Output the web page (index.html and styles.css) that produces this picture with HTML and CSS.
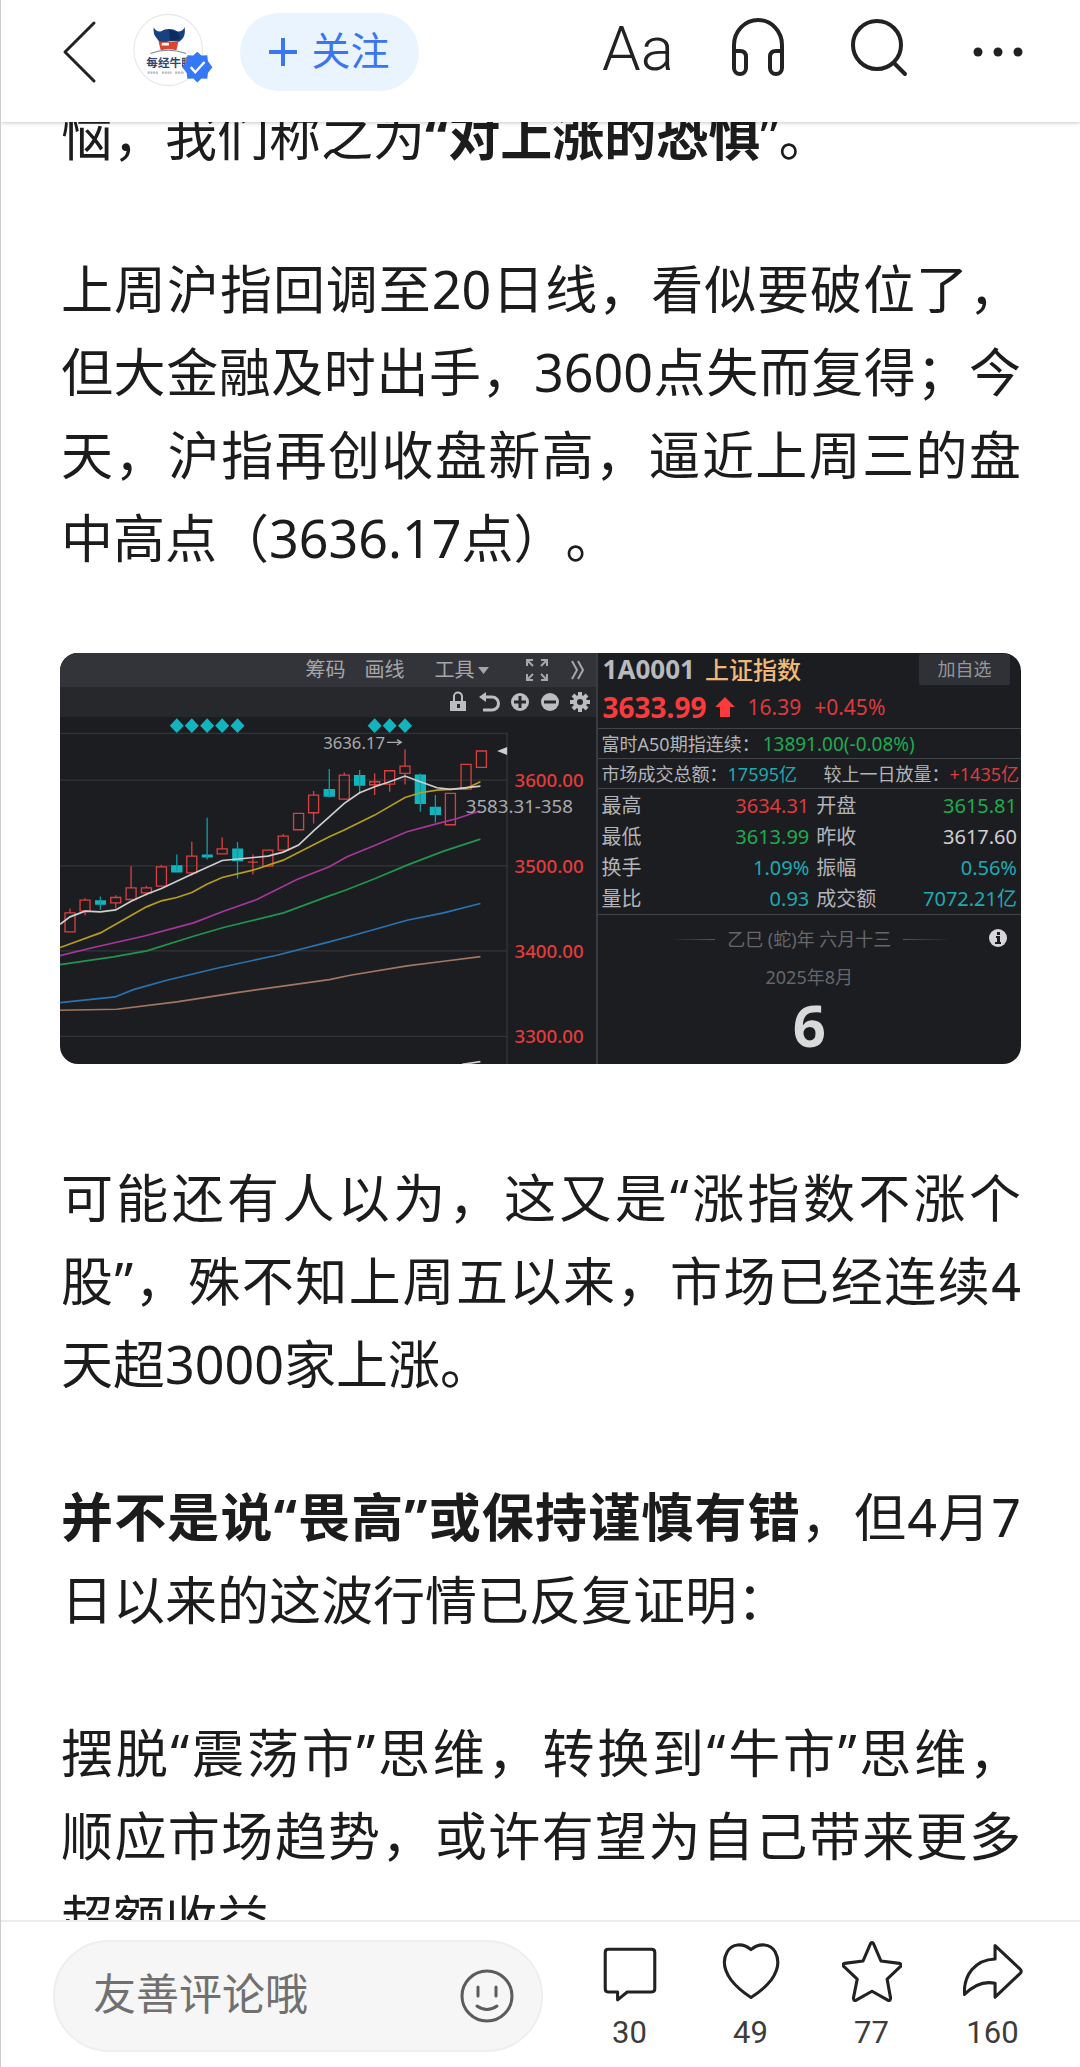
FILE: index.html
```html
<!DOCTYPE html>
<html lang="zh-CN">
<head>
<meta charset="utf-8">
<meta name="viewport" content="width=device-width, initial-scale=1">
<title>对上涨的恐惧</title>
<link rel="stylesheet" href="styles.css">
</head>
<body>
<header class="topbar">
  <button class="icon-btn back" aria-label="返回">
    <svg width="36" height="64" viewBox="0 0 36 64"><path d="M32 3 3 32 32 61"/></svg>
  </button>
  <a class="author" href="#" aria-label="作者主页">
    <svg width="80" height="74" viewBox="386 42 232 216">
      <ellipse cx="488" cy="150" rx="100" ry="104" fill="#fff" stroke="#e6e6e6" stroke-width="3"/>
      <path d="M460 125h58l-6 26q-22-6-46 0z" fill="#d9452f"/>
      <path d="M470 129h20v8h-22z" fill="#fff"/>
      <path d="M446 83q4 14 20 13 24-14 50 0 16 0 20-13 4 26-10 38l-6 5-24-3-14 4-20-1-6-8q-14-14-10-35z" fill="#17427f"/>
      <path d="M490 90l26 8 8 20-30 6z" fill="#0d2c5e"/>
      <path d="M436 160q50-18 104 0" fill="none" stroke="#7b8594" stroke-width="3"/>
      <text x="424" y="200" class="logo-name">每经牛眼</text>
      <path d="M428 216h30m12 0h28m10 0h26" stroke="#b5bac4" stroke-width="6" stroke-dasharray="6 2"/>
      <path d="M573 155l12 11 17-1 2 17 13 18-13 17-2 17-17-1-12 12-12-12-17 1-2-17-13-17 13-18 2-17 17 1z" fill="#3478f6"/>
      <path d="M554 200l13 15 27-30" fill="none" stroke="#fff" stroke-width="7"/>
    </svg>
  </a>
  <button class="follow">
    <svg width="28" height="28" viewBox="0 0 28 28"><path d="M14 1v26M1 14h26"/></svg>
    <span>关注</span>
  </button>
  <nav class="tools" aria-label="阅读工具">
    <button class="icon-btn type" aria-label="字号">Aa</button>
    <button class="icon-btn" aria-label="收听">
      <svg width="56" height="60" viewBox="0 0 56 60"><path d="M4 34V28a24 25 0 0 1 48 0v6M4 34h6q6 0 6 6v11a6 6 0 0 1-12 0zM52 34h-6q-6 0-6 6v11a6 6 0 0 0 12 0z"/></svg>
    </button>
    <button class="icon-btn" aria-label="搜索">
      <svg width="58" height="60" viewBox="0 0 58 60"><circle cx="27" cy="28" r="24"/><path d="M44 46 55 57"/></svg>
    </button>
    <button class="icon-btn" aria-label="更多">
      <svg width="52" height="60" viewBox="0 0 52 60"><g class="solid"><circle cx="6" cy="35" r="4.5"/><circle cx="26" cy="35" r="4.5"/><circle cx="46" cy="35" r="4.5"/></g></svg>
    </button>
  </nav>
</header>

<main class="reader">
  <article class="article">
    <p>恼，我们称之为<b>“对上涨的恐惧</b>”。</p>
    <p>上周沪指回调至20日线，看似要破位了，但大金融及时出手，3600点失而复得；今天，沪指再创收盘新高，逼近上周三的盘中高点（3636.17点）。</p>

    <figure class="quote-card">
      <section class="chart" aria-label="上证指数日K线">
        <div class="menu">
          <span>筹码</span>
          <span>画线</span>
          <span class="drop">工具<svg width="11" height="7" viewBox="0 0 11 7"><path d="M0 0h11L5.5 7z"/></svg></span>
          <svg class="expand" width="24" height="24" viewBox="0 0 24 24"><path d="M2 8V2h6M2 2l6 6M16 2h6v6M22 2l-6 6M2 16v6h6M2 22l6-6M22 16v6h-6M22 22l-6-6"/></svg>
          <svg class="more" width="13" height="20" viewBox="0 0 13 20"><path d="M1 1l5 9-5 9M7 1l5 9-5 9"/></svg>
        </div>
        <div class="icons">
          <svg width="30" height="22" viewBox="0 0 30 22"><path d="M5 10h16v10H5z"/><path d="M9 10V6a4 4 0 0 1 8-1v5" fill="none" stroke="#bcbdc0" stroke-width="2"/><path d="M12 13h3v4h-3z" fill="#27282c"/></svg>
          <svg width="30" height="22" viewBox="0 0 30 22"><path d="M8 6h9a6 6 0 0 1 0 13h-9" fill="none" stroke="#bcbdc0" stroke-width="3"/><path d="M4 6l7-5v10z"/></svg>
          <svg width="30" height="22" viewBox="0 0 30 22"><circle cx="15" cy="11" r="9"/><path d="M15 5v12M9 11h12" stroke="#27282c" stroke-width="3"/></svg>
          <svg width="30" height="22" viewBox="0 0 30 22"><circle cx="15" cy="11" r="9"/><path d="M9 11h12" stroke="#27282c" stroke-width="3"/></svg>
          <svg width="30" height="22" viewBox="0 0 30 22"><circle cx="15" cy="11" r="5" fill="none" stroke="#bcbdc0" stroke-width="4"/><path d="M15 1v4M15 17v4M5 11h4M21 11h4M8 4l3 3M19 15l3 3M22 4l-3 3M11 15l-3 3" stroke="#bcbdc0" stroke-width="4"/></svg>
        </div>
        <svg class="plot" viewBox="30 231 1605 1041">
          <path class="grid" d="M30 280H1370V1272M30 420H1370M30 677H1370M30 932H1370M30 1188H1370"/>
          <path class="teal" d="M359 257l21-22 21 22-21 22zM404 257l21-22 21 22-21 22zM450 257l21-22 21 22-21 22zM495 257l21-22 21 22-21 22zM541 257l21-22 21 22-21 22zM952 257l21-22 21 22-21 22zM997 257l21-22 21 22-21 22zM1043 257l21-22 21 22-21 22z"/>
          <g class="up">
            <path d="M45 818h30v57H45zM60 805v13M90 780h30v32H90zM105 774v6M105 812v13M182 772h30v16h-30zM197 765v7M197 788v17M228 743h30v35h-30zM243 678v65M274 743h30v15h-30zM289 737v6M289 758v8M319 680h30v58h-30zM334 674v6M410 648h30v50h-30zM425 605v43M425 698v8M501 626h30v15h-30zM516 592v34M593 666h30M608 643v60M638 630h30v48h-30zM684 588h30v42h-30zM699 582v6M730 520h30v49h-30zM775 465h30v53h-30zM790 453v12M790 518v32"/>
            <path d="M867 405h30v72h-30zM882 397v8M958 425h30v9h-30zM973 400v65M1003 392h30v40h-30zM1018 432v23M1049 378h30v22h-30zM1064 328v50M1064 400v33M1185 460h30v94h-30zM1232 373h30v74h-30zM1278 333h30v49h-30z"/>
          </g>
          <g class="teal">
            <path d="M135 780h33v14h-33zM363 675h34v22h-34zM455 643h33v9h-33zM546 625h33v38h-33zM820 447h34v23h-34zM911 405h34v32h-34zM1093 403h34v89h-34zM1138 500h34v25h-34z"/>
            <path class="wick" d="M151 769v40M380 643v50M471 533v125M562 606v109M837 387v85M928 390v70M1110 400v115M1155 465v82"/>
          </g>
          <polyline class="ma" stroke="#a5765f" points="30,1110 200,1107 380,1085 560,1057 837,1018 900,1005 1070,977 1180,963 1290,949"/>
          <polyline class="ma" stroke="#2874b2" points="30,1087 195,1070 250,1048 350,1020 500,984 680,945 837,905 900,888 1070,840 1180,818 1290,790"/>
          <polyline class="ma" stroke="#1f9650" points="30,973 190,950 290,932 430,888 520,862 700,818 837,767 885,750 973,716 1070,675 1180,633 1290,597"/>
          <polyline class="ma" stroke="#a8369c" points="30,946 130,922 280,888 430,848 520,813 620,778 740,718 837,680 890,650 973,616 1070,575 1155,552 1220,535 1290,512"/>
          <polyline class="ma" stroke="#b79e1c" points="30,922 151,878 243,826 289,800 334,782 380,772 425,757 470,732 516,712 608,690 699,660 837,590 882,570 973,525 1064,472 1110,458 1160,450 1247,445 1290,425"/>
          <polyline class="ma" stroke="#cfcfcf" points="30,852 60,830 105,813 151,815 197,809 243,783 289,762 334,745 425,702 516,661 580,655 653,648 699,636 745,615 790,572 837,530 882,490 928,458 973,440 1018,425 1064,408 1110,425 1160,443 1200,448 1290,438"/>
          <path class="ma" stroke="#cfcfcf" d="M1235 1272 1290 1264"/>
          <path d="M1340 333l30-12v24z" fill="#cfcfcf"/>
          <path d="M1010 307h42M1040 299l13 8-13 8" fill="none" stroke="#a9aaad" stroke-width="4"/>
          <text class="note" x="819" y="327">3636.17</text>
          <text class="note big" x="1246" y="519">3583.31-358</text>
          <text class="tick" x="1392" y="442">3600.00</text>
          <text class="tick" x="1392" y="698">3500.00</text>
          <text class="tick" x="1392" y="953">3400.00</text>
          <text class="tick" x="1392" y="1209">3300.00</text>
        </svg>
      </section>

      <section class="quote">
        <div class="name">
          <b>1A0001</b><strong>上证指数</strong>
          <button class="add">加自选</button>
        </div>
        <div class="price">
          <b>3633.99</b>
          <svg width="20" height="20" viewBox="0 0 20 20"><path d="M10 0 20 10H15V20H5V10H0z"/></svg>
          <span>16.39</span><span>+0.45%</span>
        </div>
        <div class="line"><span>富时A50期指连续：</span><span class="green future">13891.00(-0.08%)</span></div>
        <div class="line split"><span>市场成交总额：</span><span class="cyan">17595亿</span><span class="next">较上一日放量：</span><span class="red">+1435亿</span></div>
        <table class="stats">
          <tr><th scope="row">最高</th><td class="red">3634.31</td><th scope="row">开盘</th><td class="green">3615.81</td></tr>
          <tr><th scope="row">最低</th><td class="green">3613.99</td><th scope="row">昨收</th><td>3617.60</td></tr>
          <tr><th scope="row">换手</th><td class="cyan">1.09%</td><th scope="row">振幅</th><td class="cyan">0.56%</td></tr>
          <tr><th scope="row">量比</th><td class="cyan">0.93</td><th scope="row">成交额</th><td class="cyan">7072.21亿</td></tr>
        </table>
        <div class="calendar">
          <div class="lunar">
            <i class="rule"></i><span>乙巳 (蛇)年 六月十三</span><i class="rule flip"></i>
            <svg class="info" width="18" height="18" viewBox="0 0 18 18"><circle cx="9" cy="9" r="9" fill="#d6d6d8"/><path d="M8 3h3v3H8zM7 7h4v6h1v2H6v-2h2V9H7z" fill="#1c1d21"/></svg>
          </div>
          <div class="month">2025年8月</div>
          <div class="day">6</div>
        </div>
      </section>
    </figure>

    <p>可能还有人以为，这又是“涨指数不涨个股”，殊不知上周五以来，市场已经连续4天超3000家上涨。</p>
    <p><b>并不是说“畏高”或保持谨慎有错</b>，但4月7日以来的这波行情已反复证明：</p>
    <p>摆脱“震荡市”思维，转换到“牛市”思维，<span class="keep">顺应</span>市场趋势，或许有望为自己带来更多超额收益</p>
  </article>
</main>

<footer class="bottombar">
  <div class="comment-box">
    <input type="text" placeholder="友善评论哦" aria-label="评论">
    <button class="icon-btn smile" aria-label="表情">
      <svg width="54" height="54" viewBox="0 0 54 54"><circle cx="27" cy="27" r="25"/><path d="M18 18v9M36 18v9M17 37q10 7 20 0"/></svg>
    </button>
  </div>
  <button class="action" aria-label="评论 30">
    <svg width="60" height="64" viewBox="171 185 174 186"><path d="M194 212H321Q330 212 330 221V327Q330 336 321 336H250L222 359V336H194Q186 336 186 327V221Q186 212 194 212z"/></svg>
    <span>30</span>
  </button>
  <button class="action" aria-label="点赞 49">
    <svg width="60" height="64" viewBox="523 185 174 186"><path d="M610 213C585 192 555 196 541 219 526 245 532 273 552 301 568 322 588 338 610 352 632 338 653 322 669 301 689 273 694 245 680 219 666 196 635 192 610 213z"/></svg>
    <span>49</span>
  </button>
  <button class="action" aria-label="收藏 77">
    <svg width="60" height="64" viewBox="876 185 174 186"><path d="M959 195Q963 190 967 195L989 246 1043 253Q1051 256 1046 262L1007 299 1017 354Q1016 363 1009 360L963 334 917 360Q910 363 909 354L920 299 881 262Q875 256 883 253L937 246z"/></svg>
    <span>77</span>
  </button>
  <button class="action" aria-label="分享 160">
    <svg width="60" height="64" viewBox="1228 185 174 186"><path d="M1321 201 1394 270Q1400 276 1394 282L1321 351V311Q1276 300 1232 343C1229 288 1262 242 1321 240z"/></svg>
    <span>160</span>
  </button>
</footer>
</body>
</html>
```
FILE: styles.css
```css
* { box-sizing: border-box; }

body {
  margin: 0;
  height: 100vh;
  display: flex;
  flex-direction: column;
  border-left: 1px solid #cdcdcd;
  background: #fff;
  color: #1c1c1c;
  font-family: "Noto Sans", "Noto Sans CJK SC", sans-serif;
  text-spacing-trim: space-all;
}

button {
  border: 0;
  padding: 0;
  background: none;
  color: inherit;
  font: inherit;
}

svg { display: block; flex: none; }

/* top bar */
.topbar {
  flex: none;
  position: relative;
  z-index: 1;
  display: flex;
  align-items: flex-start;
  height: 122px;
  padding: 13px 56px 0 61px;
  background: #fff;
  box-shadow: 0 1px 4px rgba(0, 0, 0, .22);
}

.icon-btn svg,
.follow svg,
.action svg {
  fill: none;
  stroke: #222;
  stroke-width: 4;
  stroke-linecap: round;
  stroke-linejoin: round;
}
.icon-btn .solid { fill: #222; stroke: none; }

.back { margin-top: 7px; }
.back svg { stroke-width: 3; }
.author { margin-left: 35px; }
.logo-name { font-size: 34px; font-weight: 700; fill: #33466f; }

.follow {
  display: flex;
  align-items: center;
  justify-content: center;
  gap: 14px;
  width: 179px;
  height: 78px;
  margin-left: 27px;
  border-radius: 39px;
  background: #eaf4ff;
  color: #3a76ee;
  font-size: 39px;
  line-height: 72px;
}
.follow span { padding-bottom: 4px; }
.follow svg { stroke: #3a76ee; }

.tools {
  display: flex;
  align-items: flex-start;
  margin-left: auto;
  padding-top: 4px;
  gap: 56px;
}
.tools .icon-btn:nth-child(n + 3) { margin-left: 8px; }
.type {
  font-family: Roboto, sans-serif;
  font-weight: 300;
  font-size: 62px;
  line-height: 64px;
  color: #222;
}

/* article */
.reader { flex: 1; min-height: 0; overflow: hidden; }
.article {
  margin-top: -28px;
  padding: 0 59px;
  font-size: 52px;
  line-height: 83px;
  text-align: justify;
}
.article p { margin: 0 0 70px; padding-left: 1px; }
.keep { white-space: nowrap; }

/* market card */
.quote-card {
  display: grid;
  grid-template-columns: 535fr 425fr;
  margin: 74px 0 92px;
  border-radius: 18px;
  overflow: hidden;
  background: #1c1d21;
  color: #b3b4b7;
  font-size: 18px;
  line-height: 30px;
  text-align: left;
}
.chart { min-width: 0; }
.menu {
  display: flex;
  align-items: center;
  justify-content: flex-end;
  height: 34px;
  padding-right: 12px;
  background: #33343a;
  font-size: 20px;
  color: #a5a6aa;
}
.menu span + span { margin-left: 19px; }
.menu .drop { display: flex; align-items: center; gap: 3px; margin-left: 30px; }
.drop svg { fill: #a5a6aa; }
.expand { margin-left: 36px; }
.more { margin-left: 22px; }
.expand, .more { fill: none; stroke: #a5a6aa; stroke-width: 2; }
.icons {
  display: flex;
  align-items: center;
  justify-content: flex-end;
  height: 30px;
  padding-right: 1px;
  background: #27282c;
}
.icons svg { fill: #bcbdc0; }
.plot { width: 100%; }
.grid { fill: none; stroke: #33353a; stroke-width: 4; }
.teal { fill: #12b5bd; }
.wick { fill: none; stroke: #129aa1; stroke-width: 4; }
.up { fill: none; stroke: #d8403f; stroke-width: 4; }
.ma { fill: none; stroke-width: 5; }
.note { font-size: 50px; fill: #a9aaad; }
.note.big { font-size: 56px; }
.tick { font-size: 56px; font-weight: 500; fill: #e23c3c; }

.quote { min-width: 0; border-left: 2px solid #3a3b40; }
.name { display: flex; height: 33px; padding-left: 5px; line-height: 33px; }
.name b { font-size: 26px; color: #b9babd; }
.name strong { margin-left: 10px; font-size: 24px; font-weight: 500; color: #efb978; }
.add {
  width: 91px;
  height: 31px;
  margin: 1px 11px 0 auto;
  border-radius: 2px;
  background: #303136;
  color: #95969a;
  font-size: 18px;
  line-height: 31px;
}
.price {
  display: flex;
  align-items: center;
  height: 42px;
  padding-left: 5px;
  font-size: 21px;
  color: #dc3a3e;
}
.price b { margin-right: 8px; font-size: 28px; color: #fb3b3b; }
.price svg { fill: #fb3b3b; }
.price span { margin-left: 13px; }
.line {
  display: flex;
  height: 30px;
  padding-left: 4px;
  border-top: 1px solid #43444a;
  white-space: nowrap;
}
.line.split { padding-right: 2px; }
.split .next { margin-left: auto; }
.future { margin-left: 3px; font-size: 19px; }
.green { color: #1faa50; }
.red { color: #de3b3e; }
.cyan { color: #1fa9b2; }
.stats {
  width: 100%;
  padding: 1px 4px 0;
  border-top: 1px solid #43444a;
  border-bottom: 1px solid #43444a;
  border-spacing: 0;
  color: #d0d0d2;
  font-size: 20px;
}
.stats th, .stats td { height: 31px; padding: 0; }
.stats th { width: 25%; color: #b3b4b7; font-weight: 400; text-align: left; }
.stats td { width: 25%; text-align: right; }
.stats td + th { padding-left: 7px; }
.calendar { padding-top: 9px; color: #66676b; text-align: center; }
.lunar { position: relative; display: flex; justify-content: center; align-items: center; gap: 12px; }
.rule { width: 48px; height: 1px; background: linear-gradient(90deg, transparent, #55565a); }
.flip { background: linear-gradient(270deg, transparent, #55565a); }
.info { position: absolute; right: 14px; top: 5px; }
.month { margin-top: 8px; }
.day { font-size: 58px; font-weight: 700; line-height: 66px; color: #d9d9da; }

/* bottom bar */
.bottombar {
  flex: none;
  display: flex;
  height: 147px;
  padding: 18px 27px 0 52px;
  border-top: 2px solid #ececec;
  background: #fff;
}
.comment-box {
  flex: 1;
  min-width: 0;
  display: flex;
  align-items: center;
  height: 112px;
  margin-right: 26px;
  padding: 0 27px 0 38px;
  border: 2px solid #eee;
  border-radius: 56px;
  background: #f6f6f6;
}
.comment-box input {
  flex: 1;
  min-width: 0;
  height: 64px;
  padding: 0 0 6px;
  border: 0;
  outline: 0;
  background: none;
  font: inherit;
  font-size: 43px;
}
.comment-box input::placeholder { color: #707070; opacity: 1; }
.smile svg { stroke: #5c5c5c; stroke-width: 3; }
.action {
  display: flex;
  flex-direction: column;
  align-items: center;
  gap: 11px;
  width: 121px;
  height: 112px;
  color: #3c3c3c;
  font-family: Roboto, "Noto Sans", sans-serif;
  font-size: 31px;
  line-height: 36px;
}
.action svg { stroke-width: 9; }
```
